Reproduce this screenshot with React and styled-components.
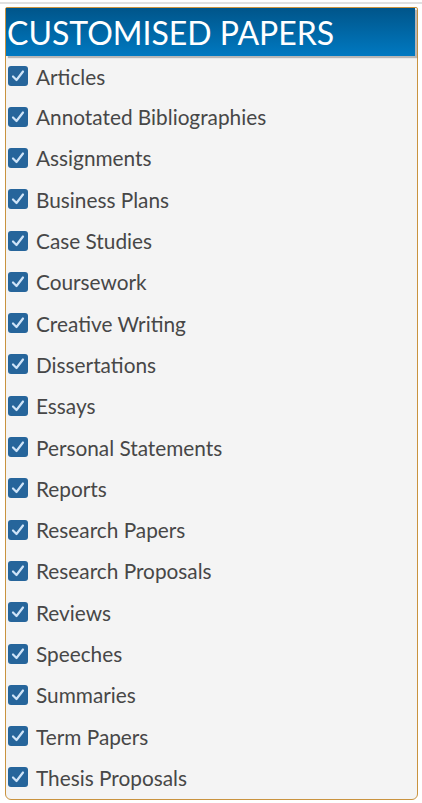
import React from "react";
import styled, { createGlobalStyle } from "styled-components";

const GlobalStyle = createGlobalStyle`
  body {
    margin: 0;
    background: #fff;
    font-family: Lato, "Open Sans", sans-serif;
  }
`;

const PAPERS = [
  "Articles",
  "Annotated Bibliographies",
  "Assignments",
  "Business Plans",
  "Case Studies",
  "Coursework",
  "Creative Writing",
  "Dissertations",
  "Essays",
  "Personal Statements",
  "Reports",
  "Research Papers",
  "Research Proposals",
  "Reviews",
  "Speeches",
  "Summaries",
  "Term Papers",
  "Thesis Proposals",
];

const Page = styled.div`
  padding-top: 2px;
`;

const TopRule = styled.div`
  height: 2px;
  background: #e0e0e0;
  margin-bottom: 3px;
`;

const Panel = styled.section`
  margin: 0 4px 0 5px;
  height: 793px;
  box-sizing: border-box;
  border: 1px solid #c9933f;
  border-radius: 2px 2px 6px 6px;
  background: #f4f4f4;
`;

const Header = styled.h2`
  margin: 0 2px 0 0;
  height: 48px;
  padding-left: 1px;
  display: flex;
  align-items: center;
  background: linear-gradient(to bottom, #00558a, #0079c1);
  box-shadow: 2px 2px 1px rgba(0, 0, 0, 0.25);
  color: #fff;
  font-family: Lato, "Open Sans", sans-serif;
  font-weight: 400;
  font-size: 32px;
`;

const List = styled.ul`
  list-style: none;
  margin: 0;
  padding: 0 0 0 2px;
`;

const Item = styled.li`
  height: 41.3px;
  display: flex;
  align-items: center;
  gap: 8px;
  color: #474747;
  font-size: 20.8px;
  &:first-child {
    height: 40px;
  }
`;

const Box = styled.span`
  width: 20px;
  height: 20px;
  border-radius: 3px;
  background: #26659b;
  display: inline-flex;
  align-items: center;
  justify-content: center;
  flex-shrink: 0;
`;

const Check = () => (
  <svg width="16" height="16" viewBox="0 0 16 16">
    <path
      d="M3 8.5 L6.5 12 L13 3.5"
      fill="none"
      stroke="#cfe4f8"
      strokeWidth="2.2"
      strokeLinecap="round"
      strokeLinejoin="round"
    />
  </svg>
);

export default function App() {
  return (
    <Page>
      <GlobalStyle />
      <TopRule />
      <Panel>
        <Header>CUSTOMISED PAPERS</Header>
        <List>
          {PAPERS.map((p) => (
            <Item key={p}>
              <Box>
                <Check />
              </Box>
              {p}
            </Item>
          ))}
        </List>
      </Panel>
    </Page>
  );
}
